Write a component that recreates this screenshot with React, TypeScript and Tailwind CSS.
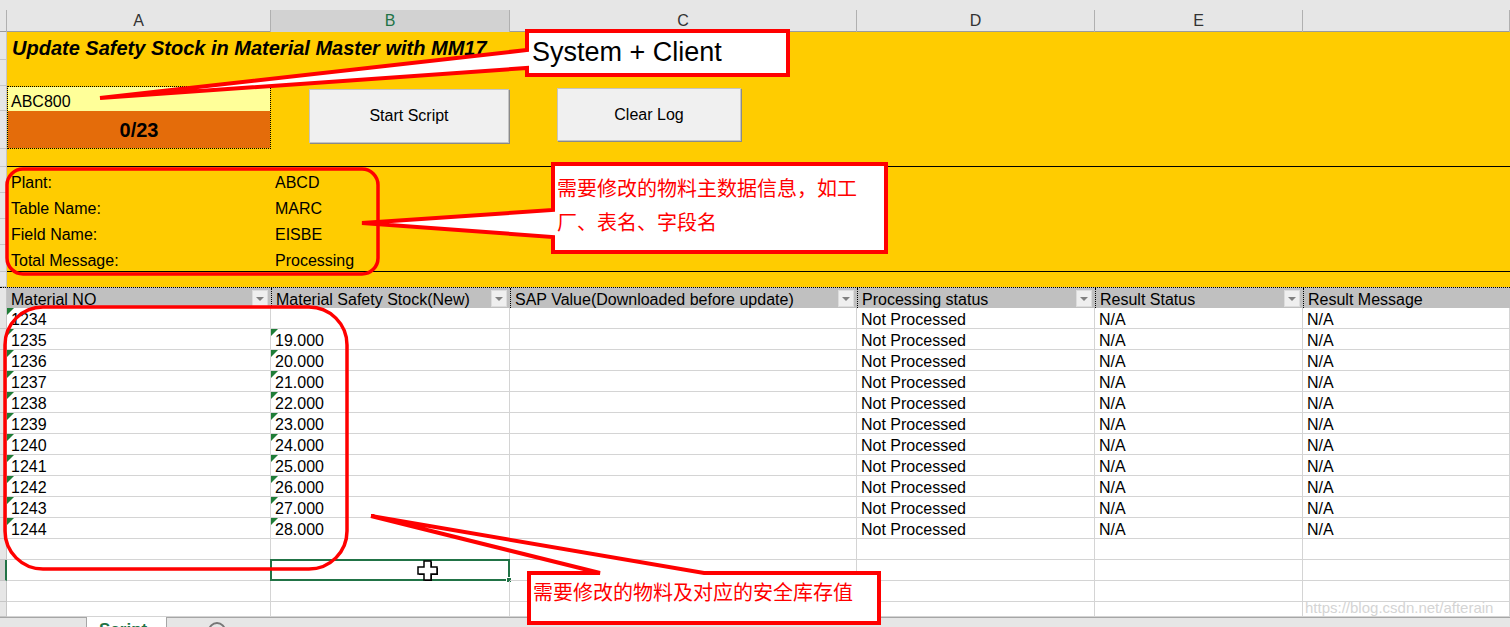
import React from 'react';

const GRID = 'grid grid-cols-[7px_264px_239px_347px_238px_208px_1fr]';

const ROWS = Array.from({ length: 11 }, (_, i) => ({
  no: String(1234 + i),
  stock: i === 0 ? '' : `${18 + i}.000`,
}));

const HEADERS = [
  'Material NO',
  'Material Safety Stock(New)',
  'SAP Value(Downloaded before update)',
  'Processing status',
  'Result Status',
  'Result Message',
];

const INFO = [
  ['Plant:', 'ABCD'],
  ['Table Name:', 'MARC'],
  ['Field Name:', 'EISBE'],
  ['Total Message:', 'Processing'],
];

// little green "number stored as text" marker
const Flag = () => (
  <span className="absolute left-0 top-0 w-0 h-0 border-t-[7px] border-t-[#1f7d37] border-r-[7px] border-r-transparent" />
);

const FilterBtn = () => (
  <span className="absolute right-[3px] top-[2px] w-[16px] h-[17px] bg-[#efefef] border border-[#dcdcdc] flex items-center justify-center">
    <span className="w-0 h-0 border-l-[4px] border-r-[4px] border-t-[4px] border-l-transparent border-r-transparent border-t-[#808080]" />
  </span>
);

const cell = 'relative h-[21px] border-r border-b border-[#d4d4d4] pl-[4px] text-[16px] leading-[24px] text-black whitespace-nowrap overflow-hidden';

function ColumnHeader() {
  const letters = ['A', 'B', 'C', 'D', 'E', ''];
  return (
    <div className="h-[32px] pt-[10px] bg-[#e6e6e6] border-b border-[#9b9b9b]">
      <div className={`${GRID} h-[21px]`}>
        <div className="border-r border-[#b0b0b0]" />
        {letters.map((l, i) => (
          <div
            key={i}
            className={
              i === 1
                ? 'bg-[#d2d2d2] border-r border-[#b0b0b0] border-b-2 border-b-[#217346] text-center text-[16px] leading-[22px] text-[#217346]'
                : 'border-r border-[#b0b0b0] text-center text-[16px] leading-[22px] text-[#333]'
            }
          >
            {l}
          </div>
        ))}
      </div>
    </div>
  );
}

function YellowBlock() {
  const heads = ['h-[28px]', 'h-[26px]', 'h-[25px]', 'h-[38px]', 'h-[18px]', 'h-[26px]', 'h-[26px]', 'h-[26px]', 'h-[27px]', 'h-[15px]'];
  return (
    <div className="flex h-[255px]">
      <div className="w-[7px] flex flex-col bg-[#e6e6e6]">
        {heads.map((h, i) => (
          <div key={i} className={`${h} border-b border-r border-[#c6c6c6]`} />
        ))}
      </div>
      <div className="flex-1 bg-[#ffcc00] flex flex-col">
        <div className="h-[54px] pl-[5px] pt-[4px] text-[20px] leading-[24px] font-bold italic text-black">
          Update Safety Stock in Material Master with MM17
        </div>
        <div className="h-[63px] flex items-start">
          <div className="w-[264px] h-[63px] border border-dotted border-black flex flex-col">
            <div className="h-[24px] bg-[#ffff99] pl-[3px] text-[16px] leading-[29px] text-black">ABC800</div>
            <div className="flex-1 bg-[#e46c0a] flex items-center justify-center text-[20px] font-bold text-black">0/23</div>
          </div>
          <button className="ml-[38px] mt-[3px] w-[200px] h-[54px] bg-[#f0f0f0] border border-[#c4c4c4] shadow-[1px_1px_0_#8a8a8a] text-[16px] text-black">
            Start Script
          </button>
          <button className="ml-[48px] mt-[2px] w-[184px] h-[53px] bg-[#f0f0f0] border border-[#c4c4c4] shadow-[1px_1px_0_#8a8a8a] text-[16px] text-black">
            Clear Log
          </button>
        </div>
        <div className="h-[17px]" />
        <div className="border-t border-black" />
        {INFO.map(([k, v]) => (
          <div key={k} className="h-[26px] flex items-end pb-[1px] text-[16px] leading-[18px] text-black">
            <div className="w-[264px] pl-[4px]">{k}</div>
            <div className="pl-[4px]">{v}</div>
          </div>
        ))}
        <div className="border-t border-black" />
        <div className="h-[15px]" />
      </div>
    </div>
  );
}

function Table() {
  return (
    <div>
      <div className={`${GRID} h-[21px] bg-[#c0c0c0] border-t border-dotted border-black`}>
        <div className="bg-[#e6e6e6] border-r border-[#c6c6c6]" />
        {HEADERS.map((h, i) => (
          <div
            key={h}
            className={`relative pl-[4px] text-[16px] leading-[23px] text-black whitespace-nowrap overflow-hidden ${i > 0 ? 'border-l border-dotted border-black' : ''}`}
          >
            {h}
            {i < 5 && <FilterBtn />}
          </div>
        ))}
      </div>
      {ROWS.map((r) => (
        <div key={r.no} className={GRID}>
          <div className="h-[21px] bg-[#e6e6e6] border-r border-b border-[#c6c6c6]" />
          <div className={cell}>
            <Flag />
            {r.no}
          </div>
          <div className={cell}>
            {r.stock && <Flag />}
            {r.stock}
          </div>
          <div className={cell} />
          <div className={cell}>Not Processed</div>
          <div className={cell}>N/A</div>
          <div className={cell}>N/A</div>
        </div>
      ))}
      {[0, 1, 2, 3].map((i) => (
        <div key={i} className={`${GRID} ${i === 3 ? 'h-[15px]' : 'h-[21px]'}`}>
          <div
            className={
              i === 1
                ? 'bg-[#d2d2d2] border-r-2 border-r-[#217346] border-b border-b-[#c6c6c6]'
                : 'bg-[#e6e6e6] border-r border-b border-[#c6c6c6]'
            }
          />
          {[0, 1, 2, 3, 4, 5].map((c) => (
            <div key={c} className="relative border-r border-b border-[#d4d4d4]">
              {i === 1 && c === 1 && (
                <div className="absolute -left-[1px] -top-[1px] -right-[1px] -bottom-[1px] border-2 border-[#217346]">
                  <span className="absolute -right-[4px] -bottom-[4px] w-[6px] h-[6px] bg-[#217346] border border-white" />
                </div>
              )}
            </div>
          ))}
        </div>
      ))}
    </div>
  );
}

function SheetTabs() {
  return (
    <div className="flex h-[10px] bg-[#e6e6e6]">
      <div className="w-[87px] border-t border-r border-[#a6a6a6] bg-[#e6e6e6]" />
      <div className="w-[79px] bg-white pl-[12px] pt-[3px] text-[17px] leading-[20px] text-[#217346] font-semibold">Script</div>
      <div className="flex-1 border-t border-l border-[#a6a6a6] relative">
        <span className="absolute left-[41px] top-[4px] w-[18px] h-[18px] rounded-full border-2 border-[#777]" />
      </div>
    </div>
  );
}

function Annotations() {
  return (
    <>
      <svg className="absolute left-0 top-0 pointer-events-none" width="1510" height="627" viewBox="0 0 1510 627">
        <rect x="7" y="169" width="371" height="105" rx="16" fill="none" stroke="#ff0000" strokeWidth="3.5" />
        <rect x="5" y="307" width="342" height="262" rx="38" fill="none" stroke="#ff0000" strokeWidth="3.5" />
        <path d="M527 31 L788 31 L788 75 L527 75 L527 68 L100 98 L527 50 Z" fill="#ffffff" stroke="#ff0000" strokeWidth="4" strokeLinejoin="miter" />
        <path d="M553 164 L886 164 L886 252 L553 252 L553 237 L362 223 L553 210 Z" fill="#ffffff" stroke="#ff0000" strokeWidth="4" />
        <path d="M529 573 L600 573 L371 516 L704 573 L879 573 L879 623 L529 623 Z" fill="#ffffff" stroke="#ff0000" strokeWidth="4" />
        {/* cross cursor */}
        <g transform="translate(417 560)">
          <path d="M8 2 H15 V8 H21 V15 H15 V21 H8 V15 H2 V8 H8 Z" fill="#000" />
          <path d="M7 1 H14 V7 H20 V14 H14 V20 H7 V14 H1 V7 H7 Z" fill="#fff" stroke="#000" strokeWidth="1.5" />
        </g>
      </svg>
      <div className="absolute left-[532px] top-[35px] text-[27px] leading-[34px] text-black">System + Client</div>
      <div className="absolute left-[557px] top-[172px] w-[320px] text-[20px] leading-[34px] text-[#ff0000] font-['Liberation_Sans','Noto_Sans_CJK_SC',sans-serif]">
        需要修改的物料主数据信息，如工厂、表名、字段名
      </div>
      <div className="absolute left-[533px] top-[579px] text-[20px] leading-[28px] text-[#ff0000] font-['Liberation_Sans','Noto_Sans_CJK_SC',sans-serif]">
        需要修改的物料及对应的安全库存值
      </div>
      <div className="absolute left-[1305px] top-[598px] text-[15px] leading-[20px] text-[#d4d4d4]">https://blog.csdn.net/afterain</div>
    </>
  );
}

export default function App() {
  return (
    <div className="relative w-[1510px] h-[627px] overflow-hidden bg-white font-['Liberation_Sans',Arial,sans-serif]">
      <ColumnHeader />
      <YellowBlock />
      <Table />
      <SheetTabs />
      <Annotations />
    </div>
  );
}
